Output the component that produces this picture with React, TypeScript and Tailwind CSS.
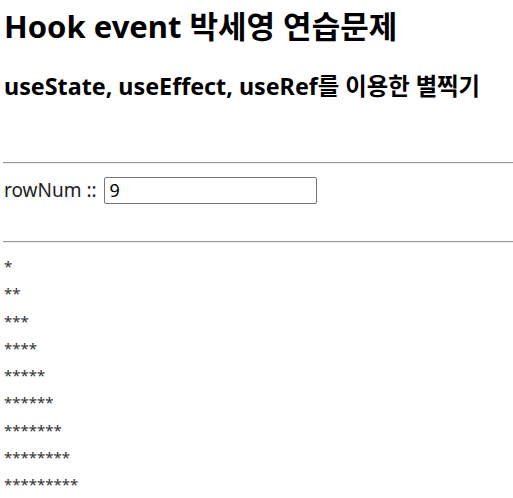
import React, { useState } from "react";

export default function App() {
  const [rowNum, setRowNum] = useState("9");
  const n = Math.max(0, Math.min(50, parseInt(rowNum, 10) || 0));
  const rows = Array.from({ length: n }, (_, i) => "*".repeat(i + 1));
  return (
    <div
      className="pl-[3px] pt-[8px] text-black bg-white min-h-[498px]"
      style={{ fontFamily: '"Noto Sans", "Noto Sans CJK KR", sans-serif' }}
    >
      <h1 className="text-[31px] leading-[36px] font-bold pl-[1px]">Hook event 박세영 연습문제</h1>
      <h2 className="mt-[27px] text-[23.3px] leading-[30px] font-bold pl-[1px]">
        useState, useEffect, useRef를 이용한 별찍기
      </h2>
      <hr className="mt-[61px] border-0 border-t border-t-[#9a9a9a] border-b border-b-[#eeeeee]" />
      <div className="mt-[13px] flex items-center h-[27px] pl-[1px]">
        <label className="text-[19px] leading-[27px] text-[#222]">rowNum ::</label>
        <input
          value={rowNum}
          onChange={(e) => setRowNum(e.target.value)}
          className="ml-[7px] w-[213px] h-[27px] border border-[#767676] rounded-[2px] px-[5px] text-[18px] outline-none"
        />
      </div>
      <hr className="mt-[37px] border-0 border-t border-t-[#9a9a9a] border-b border-b-[#eeeeee]" />
      <div className="mt-[10px] pl-[1px]">
        {rows.map((r, i) => (
          <div key={i} className="text-[15px] leading-[27.25px] text-[#333]">
            {r}
          </div>
        ))}
      </div>
    </div>
  );
}
